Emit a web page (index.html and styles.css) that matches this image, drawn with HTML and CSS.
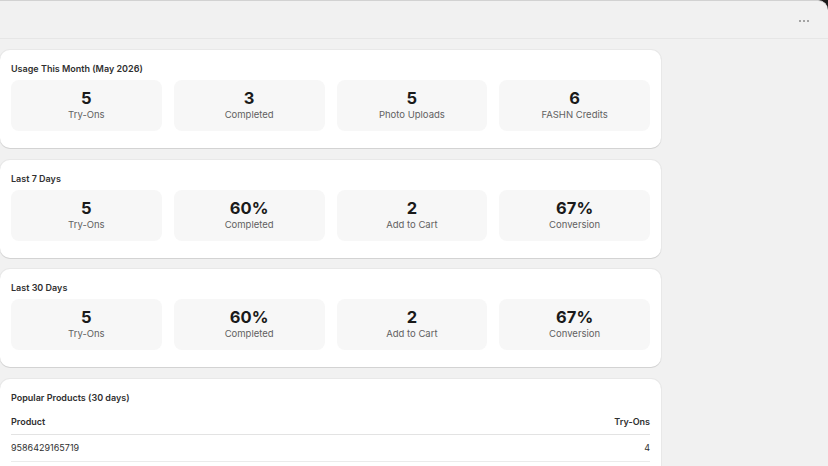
FILE: index.html
```html
<!DOCTYPE html>
<html lang="en">
<head>
  <meta charset="UTF-8" />
  <meta name="viewport" content="width=device-width, initial-scale=1.0"/>
  <title>Try-On Analytics</title>
  <link rel="stylesheet" href="styles.css">
</head>
<body>
  <div class="frame">
    <div class="topbar">
      <button class="more" aria-label="More actions">
        <svg width="12" height="4" viewBox="0 0 12 4"><circle cx="2" cy="2" r="1" /><circle cx="6" cy="2" r="1" /><circle cx="10" cy="2" r="1" /></svg>
      </button>
    </div>

    <main class="page">
      <section class="card">
        <h2>Usage This Month (May 2026)</h2>
        <div class="stats">
          <div class="stat"><div class="value">5</div><div class="label">Try-Ons</div></div>
          <div class="stat"><div class="value">3</div><div class="label">Completed</div></div>
          <div class="stat"><div class="value">5</div><div class="label">Photo Uploads</div></div>
          <div class="stat"><div class="value">6</div><div class="label">FASHN Credits</div></div>
        </div>
      </section>

      <section class="card">
        <h2>Last 7 Days</h2>
        <div class="stats">
          <div class="stat"><div class="value">5</div><div class="label">Try-Ons</div></div>
          <div class="stat"><div class="value">60%</div><div class="label">Completed</div></div>
          <div class="stat"><div class="value">2</div><div class="label">Add to Cart</div></div>
          <div class="stat"><div class="value">67%</div><div class="label">Conversion</div></div>
        </div>
      </section>

      <section class="card">
        <h2>Last 30 Days</h2>
        <div class="stats">
          <div class="stat"><div class="value">5</div><div class="label">Try-Ons</div></div>
          <div class="stat"><div class="value">60%</div><div class="label">Completed</div></div>
          <div class="stat"><div class="value">2</div><div class="label">Add to Cart</div></div>
          <div class="stat"><div class="value">67%</div><div class="label">Conversion</div></div>
        </div>
      </section>

      <section class="card">
        <h2>Popular Products (30 days)</h2>
        <table class="products">
          <thead>
            <tr><th>Product</th><th class="num">Try-Ons</th></tr>
          </thead>
          <tbody>
            <tr><td>9586429165719</td><td class="num">4</td></tr>
          </tbody>
        </table>
      </section>
    </main>
  </div>
</body>
</html>
```

FILE: styles.css
```css
body {
  margin: 0;
  background: #1a1a1a;
  font-family: Inter, "Noto Sans", sans-serif;
  color: #303030;
}
.frame {
  background: #f1f1f1;
  border-top: 1px solid #d2d2d2;
  border-top-right-radius: 10px;
  height: 100vh;
  box-sizing: border-box;
  overflow: hidden;
}
.topbar {
  height: 37px;
  border-bottom: 1px solid #e6e6e6;
  display: flex;
  align-items: center;
  justify-content: flex-end;
  padding-right: 18px;
}
.more {
  background: none;
  border: none;
  padding: 0;
  margin-top: 2px;
  fill: #8a8a8a;
  display: flex;
}
.page {
  width: 661px;
  padding-top: 11px;
  display: flex;
  flex-direction: column;
  gap: 11.5px;
}
.card {
  background: #fff;
  border-radius: 10px;
  padding: 11px 11px 17px;
  box-shadow: 0 1px 0 rgba(26,26,26,0.1), 0 0 0 1px rgba(26,26,26,0.04);
}
h2 {
  margin: 0 0 3px;
  font-size: 9px;
  line-height: 16px;
  font-weight: 600;
  color: #303030;
}
.stats {
  display: grid;
  grid-template-columns: repeat(4, 1fr);
  gap: 12px;
}
.stat {
  background: #f7f7f7;
  border-radius: 8px;
  padding: 8px 0 10px;
  text-align: center;
}
.value {
  font-size: 16.5px;
  line-height: 20px;
  font-weight: 700;
  color: #1a1a1a;
}
.label {
  font-size: 9.5px;
  line-height: 13px;
  color: #616161;
}
.products {
  width: 100%;
  border-collapse: collapse;
  font-size: 9px;
  margin-top: 2px;
}
.products th,
.products td {
  text-align: left;
  line-height: 13px;
}
.products th {
  padding: 6px 0;
  font-weight: 600;
  color: #303030;
  border-bottom: 1px solid #e3e3e3;
}
.products td {
  padding: 6px 0 7px;
  color: #303030;
  border-bottom: 1px solid #ebebeb;
}
.products .num {
  text-align: right;
}
```
